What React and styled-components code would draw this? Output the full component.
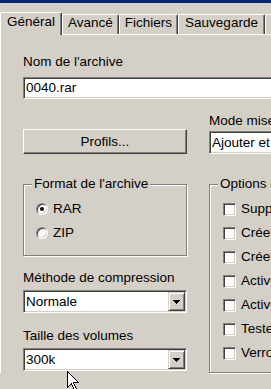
import React from 'react';
import styled, { createGlobalStyle } from 'styled-components';

const GlobalStyle = createGlobalStyle`
  html, body {
    margin: 0;
    padding: 0;
    background: #d4d0c8;
    overflow: hidden;
  }
  body {
    font-family: "Liberation Sans", Arial, sans-serif;
    font-size: 13.5px;
    line-height: 16px;
    color: #000;
  }
`;

const Window = styled.div`
  position: relative;
  width: 430px;
  height: 389px;
`;

const TitleEdge = styled.div`
  height: 3px;
  background: #0a246a;
`;

const TabBar = styled.div`
  display: flex;
  align-items: flex-end;
  height: 31px;
`;

const Tab = styled.div`
  box-sizing: border-box;
  flex: none;
  width: ${p => p.$w}px;
  height: ${p => (p.$active ? 23 : 20)}px;
  margin-bottom: ${p => (p.$active ? -1 : 0)}px;
  padding-top: ${p => (p.$active ? 1 : 0)}px;
  position: relative;
  z-index: ${p => (p.$active ? 1 : 0)};
  background: #d4d0c8;
  border-top: 1px solid #fff;
  border-left: 1px solid #fff;
  border-right: 1px solid #404040;
  border-radius: 2px 2px 0 0;
  box-shadow: inset -1px 0 #808080;
  text-align: center;
  white-space: nowrap;
  overflow: hidden;
`;

const Panel = styled.div`
  border-top: 1px solid #fff;
  border-left: 1px solid #fff;
  padding: 19px 0 0 22px;
  display: grid;
  grid-template-columns: 164px 200px;
  column-gap: 22px;
  align-items: stretch;
`;

const Wide = styled.div`
  grid-column: 1 / -1;
  display: flex;
  flex-direction: column;
`;

const Cell = styled.div`
  display: flex;
  flex-direction: column;
  justify-content: ${p => (p.$end ? 'flex-end' : 'flex-start')};
  margin-top: ${p => p.$top}px;
  min-width: 0;
`;

const Label = styled.div`
  margin-top: ${p => p.$top || 0}px;
  margin-bottom: ${p => p.$gap || 0}px;
  white-space: nowrap;
`;

const sunken = `
  box-sizing: border-box;
  border: 1px solid;
  border-color: #808080 #fff #fff #808080;
  box-shadow: inset 1px 1px #404040, inset -1px -1px #d4d0c8;
  background: #fff;
`;

const TextBox = styled.div`
  ${sunken}
  height: 22px;
  padding: 0 2px;
  line-height: 20px;
  white-space: nowrap;
`;

const ComboBox = styled.div`
  ${sunken}
  display: flex;
  height: 23px;
  padding: 1px;
`;

const ComboText = styled.div`
  flex: 1;
  padding-left: 1px;
  line-height: 19px;
  white-space: nowrap;
  overflow: hidden;
`;

const DropButton = styled.div`
  box-sizing: border-box;
  flex: none;
  width: 17px;
  height: 19px;
  border: 1px solid;
  border-color: #d4d0c8 #404040 #404040 #d4d0c8;
  box-shadow: inset 1px 1px #fff, inset -1px -1px #808080;
  background: #d4d0c8;
  display: flex;
  align-items: center;
  justify-content: center;
`;

const PushButton = styled.div`
  box-sizing: border-box;
  height: 25px;
  border: 1px solid;
  border-color: #fff #404040 #404040 #fff;
  box-shadow: inset -1px -1px #808080;
  background: #d4d0c8;
  text-align: center;
  line-height: 23px;
`;

const Group = styled.div`
  box-sizing: border-box;
  position: relative;
  height: ${p => p.$h}px;
  border: 1px solid #808080;
  box-shadow: inset 1px 1px #fff, 1px 1px #fff;
  padding: 12px 0 0 12px;
`;

const Legend = styled.div`
  position: absolute;
  top: -9px;
  left: 8px;
  padding: 0 2px;
  background: #d4d0c8;
  white-space: nowrap;
`;

const OptionRow = styled.div`
  display: flex;
  align-items: center;
  gap: 5px;
  height: 24px;
  white-space: nowrap;
`;

const RadioDot = styled.span`
  box-sizing: border-box;
  flex: none;
  position: relative;
  width: 12px;
  height: 12px;
  border-radius: 50%;
  border: 1px solid;
  border-color: #808080 #fff #fff #808080;
  box-shadow: inset 1px 1px #404040, inset -1px -1px #d4d0c8;
  background: #fff;

  &::after {
    content: '';
    display: ${p => (p.$checked ? 'block' : 'none')};
    position: absolute;
    left: 3px;
    top: 3px;
    width: 4px;
    height: 4px;
    border-radius: 50%;
    background: #000;
  }
`;

const CheckBox = styled.span`
  ${sunken}
  flex: none;
  width: 13px;
  height: 13px;
  margin-left: 1px;
`;

const Cursor = styled.svg`
  position: absolute;
  left: 67px;
  top: 371px;
`;

const Combo = ({ value }) => (
  <ComboBox>
    <ComboText>{value}</ComboText>
    <DropButton>
      <svg width="7" height="4" viewBox="0 0 7 4" shapeRendering="crispEdges">
        <path d="M0 0h7v1H0zM1 1h5v1H1zM2 2h3v1H2zM3 3h1v1H3z" fill="#000" />
      </svg>
    </DropButton>
  </ComboBox>
);

const options = [
  'Supprimer les fichiers après archivage',
  'Créer une archive auto-extractible',
  'Créer une archive solide',
  "Activer l'authenticité",
  "Activer l'enregistrement de récupération",
  'Tester les fichiers archivés',
  "Verrouiller l'archive",
];

const tabs = [
  ['Général', 62],
  ['Avancé', 57],
  ['Fichiers', 59],
  ['Sauvegarde', 87],
  ['Commentaire', 100],
];

export default function App() {
  return (
    <Window>
      <GlobalStyle />
      <TitleEdge />
      <TabBar>
        {tabs.map(([name, w], i) => (
          <Tab key={name} $w={w} $active={i === 0}>{name}</Tab>
        ))}
      </TabBar>
      <Panel>
        <Wide>
          <Label $gap={7}>Nom de l'archive</Label>
          <TextBox>0040.rar</TextBox>
        </Wide>

        <Cell $top={14} $end>
          <PushButton>Profils...</PushButton>
        </Cell>
        <Cell $top={14}>
          <Label $gap={2}>Mode mise à jour</Label>
          <Combo value="Ajouter et remplacer les fichiers" />
        </Cell>

        <Cell $top={30}>
          <Group $h={72}>
            <Legend>Format de l'archive</Legend>
            <OptionRow><RadioDot $checked />RAR</OptionRow>
            <OptionRow><RadioDot />ZIP</OptionRow>
          </Group>
          <Label $top={14} $gap={4}>Méthode de compression</Label>
          <Combo value="Normale" />
          <Label $top={15} $gap={4}>Taille des volumes</Label>
          <Combo value="300k" />
        </Cell>
        <Cell $top={30}>
          <Group $h={189}>
            <Legend>Options d'archivage</Legend>
            {options.map(o => (
              <OptionRow key={o}><CheckBox />{o}</OptionRow>
            ))}
          </Group>
        </Cell>
      </Panel>
      <Cursor width="13" height="20" viewBox="0 0 13 20" shapeRendering="crispEdges">
        <path d="M0.5 0.5V16.5L4.5 12.5L7.5 19.5L9.5 18.5L6.5 11.5H11.5Z" fill="#fff" stroke="#000" />
      </Cursor>
    </Window>
  );
}
